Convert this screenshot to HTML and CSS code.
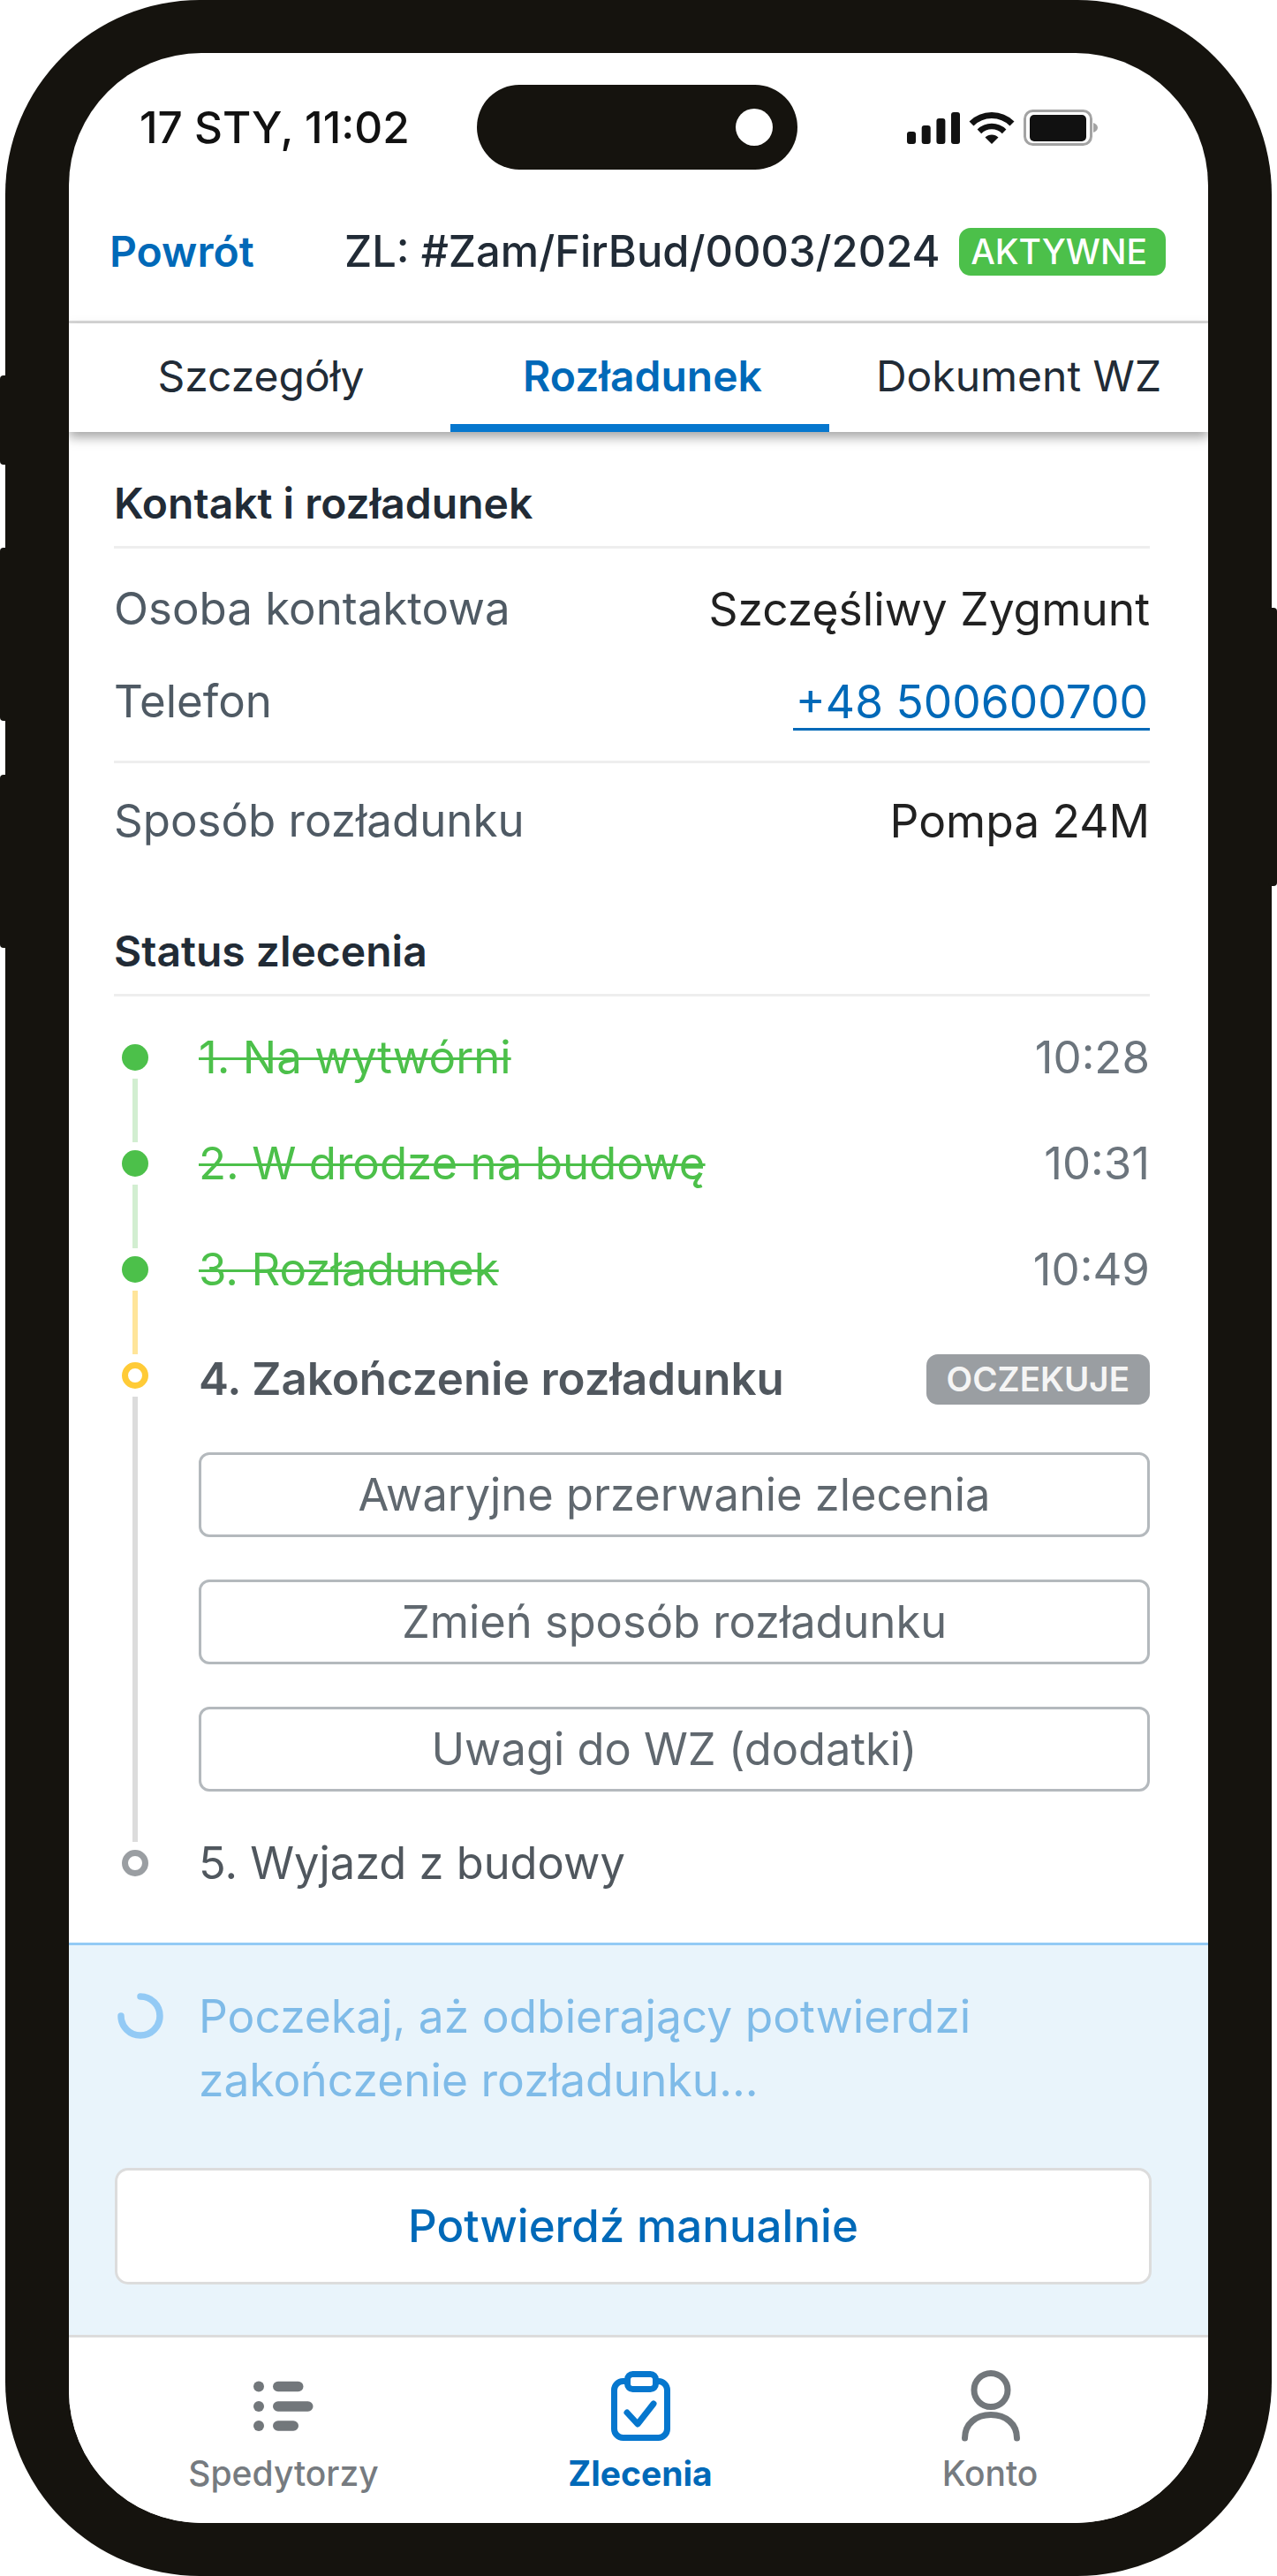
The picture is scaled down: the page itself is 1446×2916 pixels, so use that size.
FILE: index.html
```html
<!DOCTYPE html>
<html lang="pl">
<head>
    <meta charset="UTF-8">
    <meta name="viewport" content="width=device-width, initial-scale=1.0">
    <title>Rozładunek</title>
    <link rel="stylesheet" href="styles.css">
</head>
<body>
    <div class="phone">
        <span class="side-btn side-btn-1"></span>
        <span class="side-btn side-btn-2"></span>
        <span class="side-btn side-btn-3"></span>
        <span class="side-btn side-btn-4"></span>
        <div class="screen">
            <div class="status-bar">
                <div class="status-time">17 STY, 11:02</div>
                <div class="island"><span class="camera"></span></div>
                <svg class="status-icons" width="216" height="41" viewBox="0 0 216 41">
                    <rect x="0" y="25" width="10" height="14" rx="3" fill="#111"/>
                    <rect x="16.7" y="18" width="10" height="21" rx="3" fill="#111"/>
                    <rect x="33.4" y="10" width="10" height="29" rx="3" fill="#111"/>
                    <rect x="50" y="3" width="10" height="36" rx="3" fill="#111"/>
                    <path d="M73 16 A32.5 32.5 0 0 1 119 16" fill="none" stroke="#111" stroke-width="7"/>
                    <path d="M81.9 24.9 A20 20 0 0 1 110.1 24.9" fill="none" stroke="#111" stroke-width="6.5"/>
                    <path d="M96 39 L88.5 31.5 A10.6 10.6 0 0 1 103.5 31.5 Z" fill="#111"/>
                    <rect x="133.5" y="1.5" width="75" height="38" rx="9" fill="none" stroke="#a3a3a3" stroke-width="3"/>
                    <rect x="139" y="6" width="64" height="30" rx="5" fill="#111"/>
                    <path d="M211 15 C214 16 216 18 216 20.5 C216 23 214 25 211 26 Z" fill="#a3a3a3"/>
                </svg>
            </div>

            <header class="app-header">
                <a class="back-link" href="#">Powrót</a>
                <div class="order-no">ZL: #Zam/FirBud/0003/2024</div>
                <span class="badge badge-active">AKTYWNE</span>
            </header>

            <nav class="tabs">
                <a class="tab tab-first" href="#">Szczegóły</a>
                <a class="tab tab-active" href="#">Rozładunek</a>
                <a class="tab" href="#">Dokument WZ</a>
            </nav>

            <div class="content">
                <h2 class="section-title">Kontakt i rozładunek</h2>
                <div class="info-group">
                    <div class="info-row">
                        <span class="info-label">Osoba kontaktowa</span>
                        <span class="info-value">Szczęśliwy Zygmunt</span>
                    </div>
                    <div class="info-row">
                        <span class="info-label">Telefon</span>
                        <a class="info-phone" href="#">+48 500600700</a>
                    </div>
                </div>
                <div class="info-group info-group-last">
                    <div class="info-row">
                        <span class="info-label">Sposób rozładunku</span>
                        <span class="info-value">Pompa 24M</span>
                    </div>
                </div>

                <h2 class="section-title section-title-status">Status zlecenia</h2>
                <div class="timeline">
                    <div class="step step-done">
                        <div class="marker"><span class="dot"></span><span class="line"></span></div>
                        <div class="step-body">
                            <div class="step-head">
                                <span class="step-name">1. Na wytwórni</span>
                                <span class="step-time">10:28</span>
                            </div>
                        </div>
                    </div>
                    <div class="step step-done">
                        <div class="marker"><span class="dot"></span><span class="line"></span></div>
                        <div class="step-body">
                            <div class="step-head">
                                <span class="step-name">2. W drodze na budowę</span>
                                <span class="step-time">10:31</span>
                            </div>
                        </div>
                    </div>
                    <div class="step step-done step-before-current">
                        <div class="marker"><span class="dot"></span><span class="line"></span></div>
                        <div class="step-body">
                            <div class="step-head">
                                <span class="step-name">3. Rozładunek</span>
                                <span class="step-time">10:49</span>
                            </div>
                        </div>
                    </div>
                    <div class="step step-current">
                        <div class="marker"><span class="dot"></span><span class="line"></span></div>
                        <div class="step-body">
                            <div class="step-head">
                                <span class="step-name">4. Zakończenie rozładunku</span>
                                <span class="badge badge-waiting">OCZEKUJE</span>
                            </div>
                            <div class="step-actions">
                                <button class="btn-outline" type="button">Awaryjne przerwanie zlecenia</button>
                                <button class="btn-outline" type="button">Zmień sposób rozładunku</button>
                                <button class="btn-outline" type="button">Uwagi do WZ (dodatki)</button>
                            </div>
                        </div>
                    </div>
                    <div class="step step-next">
                        <div class="marker"><span class="dot"></span></div>
                        <div class="step-body">
                            <div class="step-head">
                                <span class="step-name">5. Wyjazd z budowy</span>
                            </div>
                        </div>
                    </div>
                </div>
            </div>

            <div class="wait-panel">
                <div class="wait-message">
                    <svg class="spinner" width="52" height="52" viewBox="0 0 52 52">
                        <path d="M26 4 A22 22 0 1 1 4 26" fill="none" stroke="#93caf5" stroke-width="7.5" stroke-linecap="round"/>
                    </svg>
                    <p class="wait-text">Poczekaj, aż odbierający potwierdzi zakończenie rozładunku...</p>
                </div>
                <button class="btn-confirm" type="button">Potwierdź manualnie</button>
            </div>

            <nav class="bottom-nav">
                <a class="nav-item" href="#">
                    <svg width="84" height="84" viewBox="0 0 84 84">
                        <circle cx="14" cy="21.5" r="6" fill="#72777b"/>
                        <circle cx="14" cy="44" r="6" fill="#72777b"/>
                        <circle cx="14" cy="66" r="6" fill="#72777b"/>
                        <rect x="30" y="15.7" width="34.5" height="11.6" rx="5.8" fill="#72777b"/>
                        <rect x="30" y="38.2" width="45.5" height="11.6" rx="5.8" fill="#72777b"/>
                        <rect x="30" y="60.2" width="29" height="11.6" rx="5.8" fill="#72777b"/>
                    </svg>
                    <span>Spedytorzy</span>
                </a>
                <a class="nav-item nav-item-active" href="#">
                    <svg width="84" height="84" viewBox="0 0 84 84">
                        <rect x="12.5" y="15.5" width="60" height="64" rx="10" fill="none" stroke="#0677ce" stroke-width="7"/>
                        <rect x="27.5" y="7.5" width="32" height="17" rx="6" fill="#fff" stroke="#0677ce" stroke-width="7"/>
                        <path d="M27 51 L39 64 L57 41" fill="none" stroke="#0677ce" stroke-width="7" stroke-linecap="round" stroke-linejoin="round"/>
                    </svg>
                    <span>Zlecenia</span>
                </a>
                <a class="nav-item" href="#">
                    <svg width="84" height="84" viewBox="0 0 84 84">
                        <circle cx="43" cy="25.5" r="19" fill="none" stroke="#72777b" stroke-width="7"/>
                        <path d="M13.5 80 C13.5 64 26 53.5 43 53.5 S72.5 64 72.5 80" fill="none" stroke="#72777b" stroke-width="7" stroke-linecap="round"/>
                    </svg>
                    <span>Konto</span>
                </a>
            </nav>
        </div>
    </div>
</body>
</html>
```

FILE: styles.css
```css
* {
    box-sizing: border-box;
}
body {
    margin: 0;
    background-color: white;
    font-family: Inter, "Liberation Sans", sans-serif;
    font-size: 48px;
    line-height: 72px;
    color: #212b36;
}
a {
    text-decoration: none;
}
.phone {
    position: relative;
    width: 1434px;
    height: 2916px;
    margin: 0 6px;
    padding: 60px 72px;
    background-color: #15130e;
    border-radius: 220px;
}
.side-btn {
    position: absolute;
    width: 10px;
    background-color: #15130e;
    border-radius: 4px;
}
.side-btn-1 { left: -6px; top: 425px; height: 101px; }
.side-btn-2 { left: -6px; top: 620px; height: 196px; }
.side-btn-3 { left: -6px; top: 877px; height: 196px; }
.side-btn-4 { right: -6px; top: 688px; height: 315px; }
.screen {
    height: 2796px;
    background-color: white;
    border-radius: 150px;
    overflow: hidden;
}

/* status bar */
.status-bar {
    display: flex;
    align-items: center;
    height: 168px;
    padding: 36px 0 36px 80px;
}
.status-time {
    flex: 0 0 382px;
    font-size: 49.5px;
    font-weight: 500;
    color: #111;
}
.island {
    display: flex;
    align-items: center;
    justify-content: flex-end;
    flex: 0 0 363px;
    height: 96px;
    padding-right: 28px;
    margin-right: 124px;
    background-color: #15130e;
    border-radius: 48px;
}
.camera {
    width: 42px;
    height: 42px;
    background-color: white;
    border-radius: 50%;
}

/* header and tabs */
.app-header {
    display: flex;
    align-items: center;
    height: 138px;
    padding: 0 48px 21px 46px;
    border-bottom: 3px solid #dadada;
}
.back-link {
    flex: 0 0 266px;
    font-weight: 600;
    color: #0069b8;
}
.order-no {
    font-size: 48.8px;
    font-weight: 500;
}
.badge {
    display: block;
    font-size: 39px;
    font-weight: 500;
    color: white;
    border-radius: 13px;
}
.badge-active {
    height: 54px;
    line-height: 54px;
    padding: 0 21px 0 13px;
    margin-left: auto;
    background-color: #4cc04a;
}
.tabs {
    position: relative;
    display: grid;
    grid-template-columns: 432px 429px 429px;
    height: 123px;
    background-color: white;
    box-shadow: 0 6px 12px rgba(0, 0, 0, 0.36);
}
.tab {
    padding-top: 24px;
    text-align: center;
    color: #212b36;
}
.tab-first {
    padding-left: 3px;
}
.tab-active {
    padding-left: 6px;
    font-weight: 600;
    color: #0069b8;
    border-bottom: 9px solid #0677ce;
}

/* content */
.content {
    padding: 45px 66px 75px 51px;
}
.section-title {
    margin: 0;
    padding-bottom: 12px;
    font-size: 48px;
    font-weight: 600;
    border-bottom: 3px solid #eeeeee;
}
.section-title-status {
    margin-top: 76px;
}
.info-group {
    display: flex;
    flex-direction: column;
    gap: 33px;
    padding: 32px 0 31px;
    border-bottom: 3px solid #eeeeee;
}
.info-group-last {
    padding: 29px 0 0;
    border-bottom: none;
}
.info-row {
    display: flex;
    justify-content: space-between;
    font-size: 51px;
}
.info-label {
    color: #4f5a64;
}
.info-value {
    font-size: 51.5px;
    color: #212121;
}
.info-phone {
    height: 69px;
    padding: 0 2px 0 3px;
    font-size: 51.5px;
    color: #0069b8;
    border-bottom: 3px solid #0069b8;
}

/* timeline */
.timeline {
    padding-top: 54px;
}
.step {
    display: flex;
}
.marker {
    display: flex;
    flex-direction: column;
    align-items: center;
    flex: 0 0 48px;
    margin-right: 48px;
}
.dot {
    flex: 0 0 30px;
    width: 30px;
    background-color: #4cc04a;
    border-radius: 50%;
}
.line {
    flex: 1;
    width: 6px;
    margin: 9px 0;
    background-color: #d2eed1;
}
.step-body {
    flex: 1;
    padding-bottom: 90px;
}
.step-head {
    display: flex;
    align-items: center;
    justify-content: space-between;
    height: 30px;
    font-size: 51px;
}
.step-done .step-name {
    color: #4cc04a;
    text-decoration: line-through;
    text-decoration-thickness: 3px;
}
.step-time {
    color: #6c757d;
}
.step-before-current .line {
    background-color: #ffe59a;
}
.step-current .dot {
    background-color: white;
    border: 7px solid #ffcb37;
}
.step-current .line {
    background-color: #dcdcdc;
}
.step-current .step-name {
    margin-top: 7px;
    font-weight: 600;
    color: #50575e;
}
.step-current .step-body {
    padding-bottom: 66px;
}
.badge-waiting {
    height: 57px;
    line-height: 57px;
    padding: 0 23px;
    margin-top: 9px;
    font-size: 38.5px;
    font-weight: 600;
    background-color: #9a9ea2;
    color: #f5f5f5;
}
.step-actions {
    display: flex;
    flex-direction: column;
    gap: 48px;
    margin-top: 72px;
}
.btn-outline {
    height: 96px;
    font: inherit;
    font-size: 50.6px;
    color: #60686f;
    background-color: white;
    border: 3px solid #b4b9bd;
    border-radius: 12px;
}
.step-next .dot {
    background-color: white;
    border: 7px solid #9a9ea2;
}
.step-next .step-name {
    font-size: 50.6px;
    color: #50575e;
}
.step-next .step-body {
    padding-bottom: 0;
}

/* waiting panel */
.wait-panel {
    height: 444px;
    padding: 44px 64px 0 52px;
    background-color: #e9f4fb;
    border-top: 3px solid #93caf5;
}
.wait-message {
    display: flex;
}
.spinner {
    flex: 0 0 52px;
    margin: 10px 40px 0 3px;
}
.wait-text {
    margin: 0;
    width: 960px;
    font-size: 51.5px;
    color: #7fbbe8;
}
.btn-confirm {
    display: block;
    width: 100%;
    height: 132px;
    margin-top: 64px;
    font: inherit;
    font-size: 51px;
    font-weight: 500;
    color: #0069b8;
    background-color: white;
    border: 3px solid #dcdcdc;
    border-radius: 15px;
}

/* bottom nav */
.bottom-nav {
    display: grid;
    grid-template-columns: 400px 408px 384px;
    height: 213px;
    padding: 34px 0 0 43px;
    background-color: white;
    border-top: 3px solid #dcdcdc;
}
.nav-item {
    display: flex;
    flex-direction: column;
    align-items: center;
    font-size: 39px;
    line-height: 54px;
    font-weight: 500;
    color: #767b80;
}
.nav-item svg {
    display: block;
    margin-bottom: 9px;
}
.nav-item-active {
    font-weight: 700;
    color: #0069b8;
}
```
